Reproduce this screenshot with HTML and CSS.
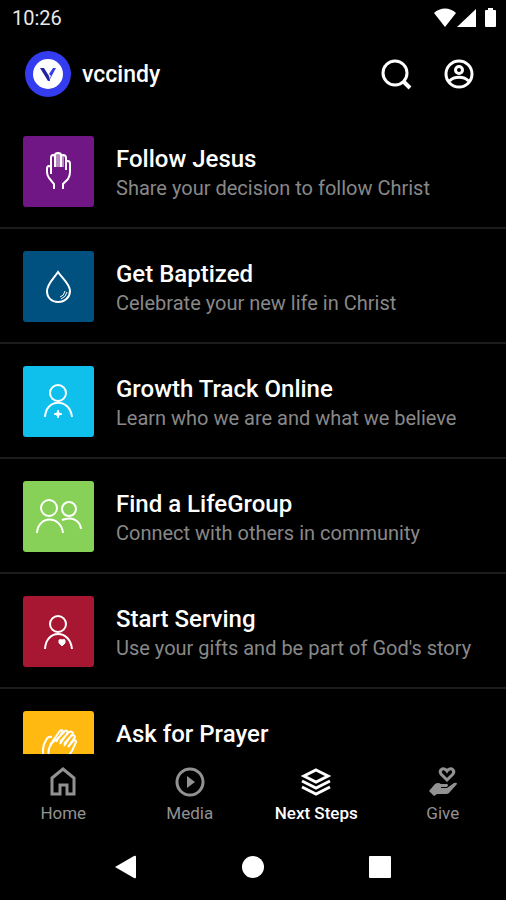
FILE: index.html
```html
<!DOCTYPE html>
<html lang="en">
<head>
  <meta charset="UTF-8">
  <meta name="viewport" content="width=device-width, initial-scale=1.0">
  <title>Next Steps</title>
  <link rel="stylesheet" href="styles.css">
</head>
<body>
  <div class="app">
    <div class="status-bar">
      <span class="time">10:26</span>
      <div class="status-icons">
        <svg width="64" height="20" viewBox="0 0 64 20" fill="#fff">
          <path d="M0 5 C6 -1 16 -1 22 5 L11 19 Z"/>
          <path d="M23 19 L42 1 V19 Z"/>
          <path d="M54 0 h5 v2 h2 q1 0 1 1 v15 q0 1 -1 1 h-9 q-1 0 -1 -1 v-15 q0 -1 1 -1 h2 z"/>
        </svg>
      </div>
    </div>

    <header class="header">
      <svg class="logo" width="46" height="46" viewBox="0 0 46 46">
        <circle cx="23" cy="23" r="23" fill="#343cf0"/>
        <circle cx="23" cy="23" r="15" fill="#fff"/>
        <path d="M15 17 H19 L24 25 L25 30 H23 Z" fill="#20249c"/>
        <path d="M24 30 L31 17 H28 L24 23 L26 25 L23 30 Z" fill="#343cf0"/>
      </svg>
      <h1>vccindy</h1>
      <div class="header-actions">
        <button class="icon-button" aria-label="Search">
          <svg width="32" height="32" viewBox="0 0 32 32" fill="none" stroke="#fff" stroke-width="3">
            <circle cx="14" cy="15" r="12"/>
            <path d="M22 23 L29 30" stroke-width="4"/>
          </svg>
        </button>
        <button class="icon-button" aria-label="Account">
          <svg width="32" height="32" viewBox="0 0 32 32" fill="none" stroke="#fff" stroke-width="3">
            <circle cx="16" cy="16" r="13"/>
            <circle cx="16" cy="12" r="3.5"/>
            <path d="M6.5 23 C11 18 21 18 25.500 23"/>
          </svg>
        </button>
      </div>
    </header>

    <main class="list">
      <a class="item" href="#follow">
        <span class="tile purple">
          <svg width="71" height="71" viewBox="0 0 71 71">
            <path d="M31 53 V48 L26 42 Q24 39 24 36 V33 Q24 30 26 30 Q28 30 28 32 V38 M28 36 V22 Q28 19 30 19 Q32 19 32 22 V31 M32 22 V19 Q32 17 35 17 Q38 17 38 19 V31 M38 20 Q38 19 40 19 Q43 19 43 22 V34 M43 26 Q43 25 45 25 Q47 25 47 28 V36 Q47 40 45 43 L40 48 V53"/>
            <path class="thin" d="M34 18 V31 M36 18 V31 M40 20 V31"/>
          </svg>
        </span>
        <span class="text">
          <span class="title">Follow Jesus</span>
          <span class="subtitle">Share your decision to follow Christ</span>
        </span>
      </a>
      <a class="item" href="#baptism">
        <span class="tile blue">
          <svg width="71" height="71" viewBox="0 0 71 71">
            <path d="M35 21 C31 27 24 33 24 40 C24 47 29 51 35 51 C42 51 47 46 47 40 C47 33 39 27 35 21 Z"/>
            <path class="thin" d="M42 40 Q41 45 37 46 M44 41 Q43 46 38 48"/>
          </svg>
        </span>
        <span class="text">
          <span class="title">Get Baptized</span>
          <span class="subtitle">Celebrate your new life in Christ</span>
        </span>
      </a>
      <a class="item" href="#growth">
        <span class="tile cyan">
          <svg width="71" height="71" viewBox="0 0 71 71">
            <circle cx="35" cy="27" r="8"/>
            <path d="M22 51 C23 32 47 32 49 51"/>
            <path class="solid" d="M35 44 L36 47 L39 48 L36 49 L35 52 L34 49 L31 48 L34 47 Z"/>
          </svg>
        </span>
        <span class="text">
          <span class="title">Growth Track Online</span>
          <span class="subtitle">Learn who we are and what we believe</span>
        </span>
      </a>
      <a class="item" href="#lifegroup">
        <span class="tile green">
          <svg width="71" height="71" viewBox="0 0 71 71">
            <circle cx="26" cy="27" r="8"/>
            <path d="M14 52 C15 34 38 34 40 52"/>
            <circle cx="46" cy="28" r="7"/>
            <path d="M39 39 C48 35 57 39 58 48"/>
          </svg>
        </span>
        <span class="text">
          <span class="title">Find a LifeGroup</span>
          <span class="subtitle">Connect with others in community</span>
        </span>
      </a>
      <a class="item" href="#serve">
        <span class="tile red">
          <svg width="71" height="71" viewBox="0 0 71 71">
            <circle cx="35" cy="28" r="8"/>
            <path d="M22 53 C23 33 47 33 49 53"/>
            <path class="solid" d="M39 50 L36 47 V44 Q38 43 39 44 Q41 43 42 44 V47 Z"/>
          </svg>
        </span>
        <span class="text">
          <span class="title">Start Serving</span>
          <span class="subtitle">Use your gifts and be part of God's story</span>
        </span>
      </a>
      <a class="item" href="#prayer">
        <span class="tile yellow">
          <svg width="71" height="71" viewBox="0 0 71 71">
            <path d="M22 48 C18 40 20 34 23 29 Q25 25 29 26 M27 48 C24 42 26 36 29 32 Q31 30 33 28 M27 34 L36 21 Q38 18 40 20 L33 31 M33 29 L41 21 Q43 18 45 21 L37 33 M37 31 L45 22 Q48 19 50 22 L41 35 M41 33 L48 25 Q51 23 52 26 L45 36 M45 36 L50 30 Q53 28 53 31 L49 40 L42 49"/>
          </svg>
        </span>
        <span class="text">
          <span class="title">Ask for Prayer</span>
        </span>
      </a>
    </main>

    <nav class="tabs">
      <a class="tab" href="#home">
        <svg width="32" height="32" viewBox="0 0 32 32" fill="none" stroke="currentColor" stroke-width="3">
          <path d="M5 12 L16 3 L27 12 V28 H20 V19 H13 V28 H5 Z"/>
        </svg>
        Home
      </a>
      <a class="tab" href="#media">
        <svg width="32" height="32" viewBox="0 0 32 32" fill="none" stroke="currentColor" stroke-width="3">
          <circle cx="16" cy="16" r="13"/>
          <path d="M13 10 L21 16 L13 22 Z" fill="currentColor" stroke="none"/>
        </svg>
        Media
      </a>
      <a class="tab active" href="#next-steps">
        <svg width="32" height="32" viewBox="0 0 32 32" fill="none" stroke="currentColor" stroke-width="3">
          <path d="M16 4 L28 10 L16 16 L4 10 Z"/>
          <path d="M2 15 L16 22 L30 15 M2 21 L16 28 L30 21"/>
        </svg>
        Next Steps
      </a>
      <a class="tab" href="#give">
        <svg width="32" height="32" viewBox="0 0 32 32" fill="currentColor">
          <path d="M20 14 L14 8 Q12 5 15 3 Q18 2 20 5 Q22 2 25 3 Q28 5 26 8 Z" fill="none" stroke="currentColor" stroke-width="3"/>
          <path d="M2 25 L8 18 Q11 16 14 18 H20 Q22 19 20 21 H14 V22 H20 L27 17 Q30 16 30 18 L22 27 Q21 28 19 28 H10 L7 30 Z"/>
        </svg>
        Give
      </a>
    </nav>

    <div class="system-bar">
      <button class="icon-button" aria-label="Back">
        <svg width="24" height="24" viewBox="0 0 24 24" fill="#fff"><path d="M1 12 L20 1 Q22 0 22 2 V22 Q22 24 20 23 Z"/></svg>
      </button>
      <button class="icon-button" aria-label="Home screen">
        <svg width="24" height="24" viewBox="0 0 24 24" fill="#fff"><circle cx="12" cy="12" r="11"/></svg>
      </button>
      <button class="icon-button" aria-label="Recent apps">
        <svg width="24" height="24" viewBox="0 0 24 24" fill="#fff"><rect x="1" y="1" width="22" height="22" rx="1"/></svg>
      </button>
    </div>
  </div>
</body>
</html>
```
FILE: styles.css
```css
* {
  box-sizing: border-box;
}
body {
  margin: 0;
  background: #000;
  color: #fff;
  font-family: Roboto, "Liberation Sans", sans-serif;
}
a {
  color: inherit;
  text-decoration: none;
}
svg {
  display: block;
}
.app {
  display: flex;
  flex-direction: column;
  height: 100vh;
}
.status-bar {
  display: flex;
  align-items: center;
  justify-content: space-between;
  height: 36px;
  padding: 0 8px 0 12px;
}
.time {
  font-size: 20px;
  color: #e8e8e8;
}
.header {
  display: flex;
  align-items: center;
  height: 76px;
  padding: 0 31px 0 25px;
}
.header h1 {
  margin: 0 0 0 11px;
  font-size: 23px;
  font-weight: 500;
}
.header-actions {
  display: flex;
  gap: 30px;
  margin-left: auto;
}
.icon-button {
  padding: 0;
  border: none;
  background: none;
  cursor: pointer;
}
.list {
  flex: 1;
  min-height: 0;
  padding-top: 2px;
  overflow: hidden;
}
.item {
  display: flex;
  gap: 22px;
  padding: 22px 23px 20px;
  border-bottom: 2px solid #1c1c1c;
}
.tile {
  flex: none;
  border-radius: 3px;
}
.tile svg {
  fill: none;
  stroke: #fff;
  stroke-width: 2;
}
.tile .thin {
  stroke-width: 1;
}
.tile .solid {
  fill: #fff;
  stroke-width: 1;
}
.purple {
  background: #701785;
}
.blue {
  background: #005080;
}
.cyan {
  background: #0fc0ec;
}
.green {
  background: #87d158;
}
.red {
  background: #a81731;
}
.yellow {
  background: #ffb911;
}
.text {
  display: flex;
  flex-direction: column;
  padding-top: 8px;
}
.title {
  font-size: 24px;
  font-weight: 500;
  line-height: 30px;
}
.subtitle {
  font-size: 20px;
  line-height: 28px;
  color: #888;
}
.tabs {
  display: grid;
  grid-template-columns: repeat(4, 1fr);
  height: 80px;
  padding-top: 12px;
}
.tab {
  display: flex;
  flex-direction: column;
  align-items: center;
  gap: 4px;
  font-size: 17px;
  line-height: 22px;
  color: #929292;
}
.tab.active {
  color: #fff;
  font-weight: 500;
}
.system-bar {
  display: flex;
  align-items: center;
  justify-content: center;
  gap: 103px;
  height: 66px;
}
```
